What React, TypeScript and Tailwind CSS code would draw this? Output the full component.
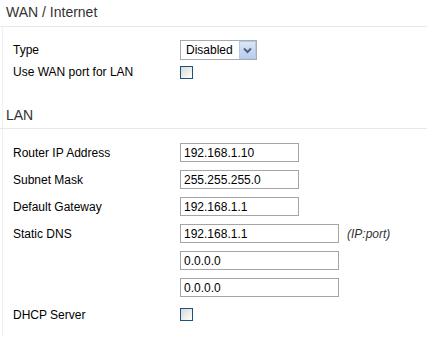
import React from "react";

const font = { fontFamily: '"Liberation Sans", Arial, sans-serif' };

function Checkbox() {
  return (
    <div className="w-[13px] h-[13px] border border-[#1c5180] bg-gradient-to-br from-[#d8d8d4] to-[#ffffff]" />
  );
}

function Select() {
  return (
    <div className="flex w-[77px] h-[20px] border border-[#a5acb2] bg-white">
      <div className="flex-1 flex items-center pl-[5px] text-[12px] text-black">Disabled</div>
      <div className="w-[17px] h-[18px] border border-[#b5c8e6] bg-gradient-to-b from-[#dbe6f6] to-[#b9cdec] flex items-center justify-center">
        <svg width="9" height="7" viewBox="0 0 9 7">
          <path d="M1 1.5 L4.5 5 L8 1.5" fill="none" stroke="#4d6185" strokeWidth="2" />
        </svg>
      </div>
    </div>
  );
}

function Input({ value, wide }: { value: string; wide?: boolean }) {
  return (
    <div
      className={`${wide ? "w-[159px]" : "w-[119px]"} h-[19px] border border-[#a5a5a5] bg-white flex items-center pl-[3px] text-[12px] text-black`}
    >
      {value}
    </div>
  );
}

function Row({ label, children, h }: { label: string; children?: React.ReactNode; h: string }) {
  return (
    <div className={`flex items-center ${h}`}>
      <div className="w-[177px] pl-[10px] text-[12px] text-black">{label}</div>
      <div className="flex items-center">{children}</div>
    </div>
  );
}

export default function App() {
  return (
    <div className="w-[427px] h-[337px] bg-white overflow-hidden" style={font}>
      <div className="h-[27px] border-b border-[#e8e8e8] pl-[6px] pt-[4px] text-[14px] leading-[16px] text-[#333]">
        WAN / Internet
      </div>
      <div className="ml-[2px] border-l border-[#f0f0f0] h-[310px]">
        <div className="pt-[12px] pb-[19px]">
          <Row label="Type" h="h-[22px]">
            <Select />
          </Row>
          <Row label="Use WAN port for LAN" h="h-[22px]">
            <Checkbox />
          </Row>
        </div>
        <div className="h-[27px] -ml-[3px] border-b border-[#e8e8e8] pl-[6px] pt-[5px] text-[14px] leading-[16px] text-[#333]">
          LAN
        </div>
        <div className="pt-[10px]">
          <Row label="Router IP Address" h="h-[27px]">
            <Input value="192.168.1.10" />
          </Row>
          <Row label="Subnet Mask" h="h-[27px]">
            <Input value="255.255.255.0" />
          </Row>
          <Row label="Default Gateway" h="h-[27px]">
            <Input value="192.168.1.1" />
          </Row>
          <Row label="Static DNS" h="h-[27px]">
            <Input value="192.168.1.1" wide />
            <span className="ml-[8px] text-[12px] italic text-[#333]">(IP:port)</span>
          </Row>
          <Row label="" h="h-[27px]">
            <Input value="0.0.0.0" wide />
          </Row>
          <Row label="" h="h-[27px]">
            <Input value="0.0.0.0" wide />
          </Row>
          <Row label="DHCP Server" h="h-[27px]">
            <Checkbox />
          </Row>
        </div>
      </div>
    </div>
  );
}
